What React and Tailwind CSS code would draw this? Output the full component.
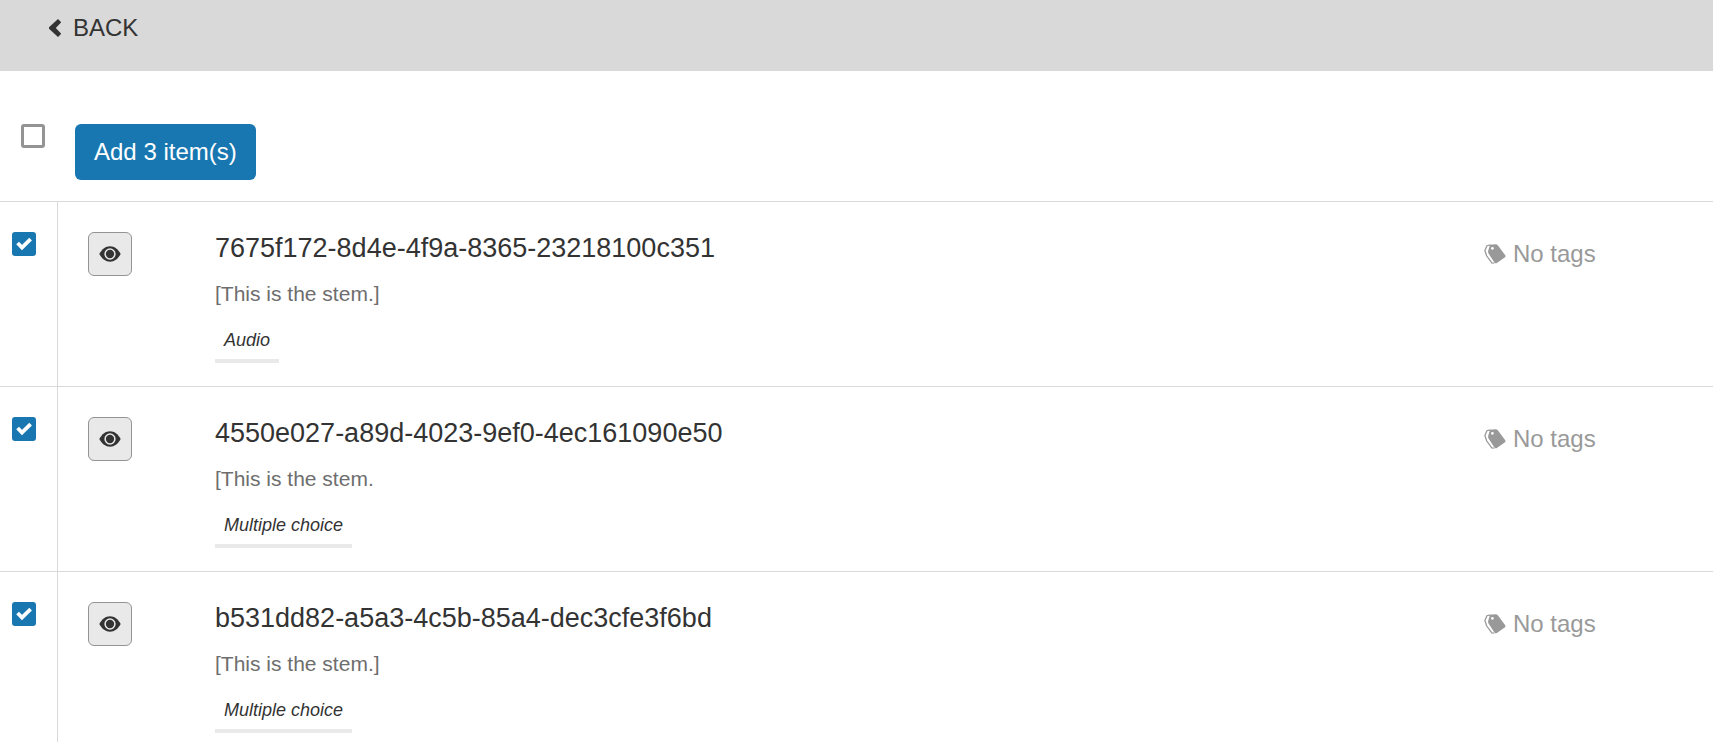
import { useState } from "react";

const ITEMS = [
  { id: "7675f172-8d4e-4f9a-8365-23218100c351", stem: "[This is the stem.]", type: "Audio" },
  { id: "4550e027-a89d-4023-9ef0-4ec161090e50", stem: "[This is the stem.", type: "Multiple choice" },
  { id: "b531dd82-a5a3-4c5b-85a4-dec3cfe3f6bd", stem: "[This is the stem.]", type: "Multiple choice" },
];

function ChevronIcon() {
  return (
    <svg viewBox="0 0 12 18" className="h-[18px] w-3" aria-hidden="true">
      <path d="M9 0 L12.200 3.200 L6.800 9 L12.200 14.800 L9 18 L-0.300 9.600 L-0.300 8.400 Z" fill="#333" />
    </svg>
  );
}

function EyeIcon() {
  return (
    <svg viewBox="0 0 22 16" className="h-4 w-[22px]" aria-hidden="true">
      <path d="M0.300 8 C3 3 6.800 0.300 11 0.300 C15.200 0.300 19 3 21.700 8 C19 13 15.200 15.700 11 15.700 C6.800 15.700 3 13 0.300 8 Z" fill="#333" />
      <circle cx="11" cy="8" r="4.900" fill="#333" stroke="#e9e9e9" strokeWidth="1.500" />
    </svg>
  );
}

function TagsIcon() {
  return (
    <svg viewBox="0 0 22 20" className="h-5 w-[22px]" aria-hidden="true">
      <path d="M6.500 0.900 L2.900 1.700 L0.900 6.500 L2.600 11.800 L7.800 18.800 L10.300 19.200" fill="none" stroke="#999" strokeWidth="1.300" />
      <path fillRule="evenodd" d="M6 0.800 L11.500 0.300 Q13 0.300 14 1.500 L21.400 11.500 Q21.800 12.500 21 13.300 L12.500 19.200 Q11.200 19.700 10.400 18.500 L4.400 9.300 Q3.900 8.200 4.200 6.700 Z M8.400 2.900 a1.400 1.400 0 1 0 0.010 0 Z" fill="#999" />
    </svg>
  );
}

function Checkbox({ label, checked, onChange }) {
  return (
    <label className="grid size-6 shrink-0 cursor-pointer">
      <input
        type="checkbox"
        aria-label={label}
        checked={checked}
        onChange={onChange}
        className="peer col-start-1 row-start-1 size-6 appearance-none rounded-[3px] border-3 border-[#949494] bg-white checked:border-[#1877b1] checked:bg-[#1877b1]"
      />
      <svg viewBox="0 0 24 24" className="pointer-events-none col-start-1 row-start-1 hidden size-6 peer-checked:block" aria-hidden="true">
        <path d="M5.600 11 L10 15.600 L18.600 7.200" fill="none" stroke="#fff" strokeWidth="3.800" />
      </svg>
    </label>
  );
}

function ItemRow({ item, checked, onToggle }) {
  return (
    <li className="flex border-t border-[#d9d9d9]">
      <div className="flex w-[58px] shrink-0 border-r border-[#d9d9d9] pt-[30px] pl-3">
        <Checkbox label={"Select " + item.id} checked={checked} onChange={onToggle} />
      </div>
      <div className="flex min-w-0 flex-1 items-start pt-[30px] pb-[23px] pl-[30px]">
        <button
          type="button"
          aria-label={"Preview " + item.id}
          className="flex size-11 shrink-0 items-center justify-center rounded-md border border-[#949494] bg-[#e9e9e9]"
        >
          <EyeIcon />
        </button>
        <div className="ml-[83px] min-w-0 flex-1">
          <h2 className="text-[27px] leading-8">{item.id}</h2>
          <p className="mt-4 text-[21px] leading-7 text-[#6e6e6e]">{item.stem}</p>
          <span className="mt-4 inline-block border-b-4 border-[#e9e9e9] px-[9px] pb-[3px] text-lg leading-8 italic">
            {item.type}
          </span>
        </div>
        <div className="flex w-[229px] shrink-0 items-center gap-[7px] pt-2 text-2xl leading-7 text-[#999]">
          <TagsIcon />
          <span>No tags</span>
        </div>
      </div>
    </li>
  );
}

export default function App() {
  const [selected, setSelected] = useState(ITEMS.map((item) => item.id));
  const [all, setAll] = useState(false);

  const toggle = (id) =>
    setSelected((ids) => (ids.includes(id) ? ids.filter((other) => other !== id) : [...ids, id]));
  const toggleAll = () => {
    setSelected(all ? [] : ITEMS.map((item) => item.id));
    setAll(!all);
  };

  return (
    <div className="bg-white font-['Liberation_Sans',Arial,sans-serif] text-[#333]">
      <header className="bg-[#d9d9d9] pt-3 pb-[27px] pl-[49px]">
        <a href="#back" className="inline-flex items-center gap-3 align-top text-2xl leading-8">
          <ChevronIcon />
          BACK
        </a>
      </header>
      <main>
        <div className="flex items-start gap-[30px] pt-[53px] pb-[21px] pl-[21px]">
          <Checkbox label="Select all items" checked={all} onChange={toggleAll} />
          <button type="button" className="rounded-md bg-[#1877b1] px-[19px] py-3 text-2xl leading-8 text-white">
            Add {selected.length} item(s)
          </button>
        </div>
        <ul>
          {ITEMS.map((item) => (
            <ItemRow key={item.id} item={item} checked={selected.includes(item.id)} onToggle={() => toggle(item.id)} />
          ))}
        </ul>
      </main>
    </div>
  );
}
